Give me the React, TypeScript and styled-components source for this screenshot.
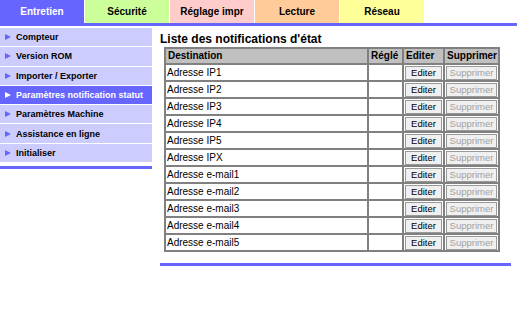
import styled, { createGlobalStyle } from "styled-components";

const GlobalStyle = createGlobalStyle`
  body {
    margin: 0;
    background: #ffffff;
    font-family: "Liberation Sans", Arial, sans-serif;
  }
`;

type Tab = { label: string; bg: string; color: string };

const tabs: Tab[] = [
  { label: "Entretien", bg: "#6666ff", color: "#ffffff" },
  { label: "Sécurité", bg: "#ccff99", color: "#000000" },
  { label: "Réglage impr", bg: "#ffcccc", color: "#000000" },
  { label: "Lecture", bg: "#ffcc99", color: "#000000" },
  { label: "Réseau", bg: "#ffff99", color: "#000000" },
];

const menu = [
  "Compteur",
  "Version ROM",
  "Importer / Exporter",
  "Paramètres notification statut",
  "Paramètres Machine",
  "Assistance en ligne",
  "Initialiser",
];

const rows = [
  "Adresse IP1",
  "Adresse IP2",
  "Adresse IP3",
  "Adresse IP4",
  "Adresse IP5",
  "Adresse IPX",
  "Adresse e-mail1",
  "Adresse e-mail2",
  "Adresse e-mail3",
  "Adresse e-mail4",
  "Adresse e-mail5",
];

// column widths in px, as measured on the page
const cols = [203, 35, 41, 55];

const App: React.FC = () => {
  return (
    <>
      <GlobalStyle />
      <TabBar>
        {tabs.map((t) => (
          <TabItem key={t.label} bg={t.bg} fg={t.color}>
            {t.label}
          </TabItem>
        ))}
      </TabBar>
      <Body>
        <Sidebar>
          <MenuList>
            {menu.map((m, i) => (
              <MenuItem key={m} active={i === 3}>
                <Arrow active={i === 3} />
                {m}
              </MenuItem>
            ))}
          </MenuList>
          <Rule />
        </Sidebar>
        <Content>
          <Title>Liste des notifications d'état</Title>
          <Table>
            <colgroup>
              {cols.map((w, i) => (
                <col key={i} style={{ width: w }} />
              ))}
            </colgroup>
            <thead>
              <tr>
                <Th>Destination</Th>
                <Th>Réglé</Th>
                <Th>Editer</Th>
                <Th>Supprimer</Th>
              </tr>
            </thead>
            <tbody>
              {rows.map((r) => (
                <tr key={r}>
                  <Td>{r}</Td>
                  <Td />
                  <BtnCell>
                    <Button>Editer</Button>
                  </BtnCell>
                  <BtnCell>
                    <Button disabled>Supprimer</Button>
                  </BtnCell>
                </tr>
              ))}
            </tbody>
          </Table>
          <ContentRule />
        </Content>
      </Body>
    </>
  );
};

const TabBar = styled.div`
  display: flex;
  height: 23px;
  border-bottom: 3px solid #6666ff;
`;

const TabItem = styled.div<{ bg: string; fg: string }>`
  width: 84px;
  margin-right: 1px;
  background: ${(p) => p.bg};
  color: ${(p) => p.fg};
  font-size: 10px;
  font-weight: bold;
  display: flex;
  align-items: center;
  justify-content: center;
  padding-bottom: 1px;
`;

const Body = styled.div`
  display: flex;
  align-items: flex-start;
`;

const Sidebar = styled.div`
  flex: 0 0 152px;
  padding-top: 2px;
`;

const MenuList = styled.div`
  display: flex;
  flex-direction: column;
  gap: 1px;
`;

const MenuItem = styled.div<{ active: boolean }>`
  height: 18.3px;
  display: flex;
  align-items: center;
  padding-left: 5px;
  background: ${(p) => (p.active ? "#6666ff" : "#ccccff")};
  color: ${(p) => (p.active ? "#ffffff" : "#000000")};
  font-size: 9px;
  font-weight: bold;
  white-space: nowrap;
`;

const Arrow = styled.span<{ active: boolean }>`
  width: 0;
  height: 0;
  border-top: 3.5px solid transparent;
  border-bottom: 3.5px solid transparent;
  border-left: 6px solid ${(p) => (p.active ? "#ffffff" : "#6666ff")};
  margin-right: 5px;
`;

const Rule = styled.div`
  margin-top: 4px;
  height: 3px;
  background: #6666ff;
`;

const Content = styled.div`
  flex: 0 0 351px;
  padding: 6px 0 0 8px;
`;

const Title = styled.div`
  font-size: 12px;
  font-weight: bold;
  height: 14px;
  line-height: 14px;
  margin-bottom: 1px;
`;

const Table = styled.table`
  margin-left: 4px;
  border-collapse: collapse;
  border: 2px solid #808080;
  font-size: 10px;
  width: 334px;
  table-layout: fixed;
`;

const Th = styled.th`
  background: #c0c0c0;
  border: 2px solid #808080;
  text-align: left;
  font-weight: bold;
  padding: 0 1px 0 2px;
  height: 14px;
  line-height: 14px;
  font-size: 10px;
  white-space: nowrap;
  overflow: hidden;
`;

const Td = styled.td`
  border: 2px solid #808080;
  padding: 0 1px;
  height: 15px;
  line-height: 13px;
  background: #ffffff;
`;

const BtnCell = styled.td`
  border: 2px solid #808080;
  padding: 0 1px;
  height: 15px;
  text-align: center;
`;

const Button = styled.button`
  font-family: "Liberation Sans", Arial, sans-serif;
  font-size: 9.5px;
  height: 14px;
  padding: 0;
  width: 100%;
  background: #f0f0f0;
  border: 1px solid #999999;
  border-radius: 0;
  color: #000000;
  display: block;
  &:disabled {
    color: #a0a0a0;
  }
`;

const ContentRule = styled.div`
  margin-top: 11px;
  height: 3px;
  background: #6666ff;
`;

export default App;
